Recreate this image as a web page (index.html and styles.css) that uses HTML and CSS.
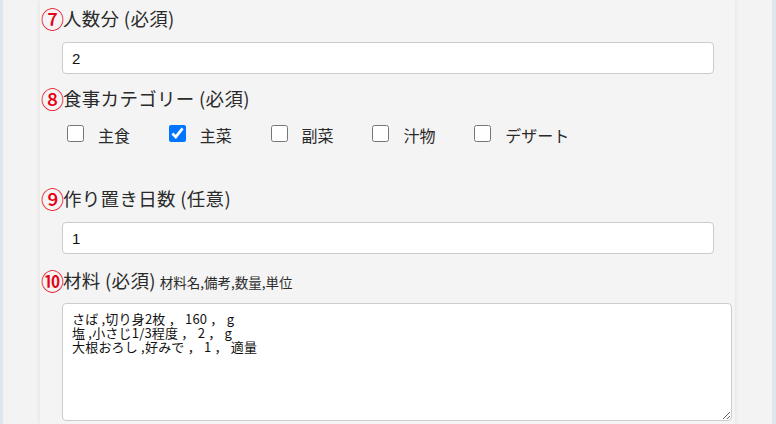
FILE: index.html
```html
<!DOCTYPE html>
<html lang="ja">
<head>
<meta charset="utf-8">
<link rel="stylesheet" href="styles.css">
</head>
<body>
<div class="page">
  <form class="card">
    <div class="label-row first"><span class="num">⑦</span><span class="title">人数分 (必須)</span></div>
    <input class="field" type="text" value="2">

    <div class="label-row"><span class="num">⑧</span><span class="title">食事カテゴリー (必須)</span></div>
    <div class="checks">
      <label class="check"><input type="checkbox"><span>主食</span></label>
      <label class="check"><input type="checkbox" checked><span>主菜</span></label>
      <label class="check"><input type="checkbox"><span>副菜</span></label>
      <label class="check"><input type="checkbox"><span>汁物</span></label>
      <label class="check"><input type="checkbox"><span>デザート</span></label>
    </div>

    <div class="label-row gap-big"><span class="num">⑨</span><span class="title">作り置き日数 (任意)</span></div>
    <input class="field" type="text" value="1">

    <div class="label-row gap-mid"><span class="num">⑩</span><span class="title">材料 (必須)</span><span class="hint">材料名,備考,数量,単位</span></div>
    <textarea class="area">さば ,切り身2枚 ， 160 ， g
塩 ,小さじ1/3程度 ， 2 ， g
大根おろし ,好みで ， 1 ， 適量</textarea>
  </form>
</div>
</body>
</html>
```

FILE: styles.css
```css
* { box-sizing: border-box; }
html, body { margin: 0; padding: 0; }
body {
  background: #dce6ec;
  font-family: "Noto Sans CJK JP", "Noto Sans", sans-serif;
  color: #333;
  overflow: hidden;
  height: 424px;
}
.page {
  margin: 0 4px 0 3px;
  background: #f3f3f3;
  height: 424px;
  padding: 0 37px;
  display: flow-root;
}
.card {
  width: 695px;
  height: 424px;
  background: #f4f4f4;
  box-shadow: 0 0 5px rgba(0, 0, 0, 0.09);
  display: flex;
  flex-direction: column;
  align-items: flex-start;
}
.label-row {
  display: flex;
  align-items: center;
  height: 24px;
  margin-top: 12px;
}
.label-row.first { margin-top: 6px; }
.label-row.gap-big { margin-top: 38px; }
.label-row.gap-mid { margin-top: 14px; }
.num {
  color: #e60012;
  font-size: 23px;
  font-weight: 500;
  width: 21px;
  margin-left: 1px;
  margin-right: 1px;
  line-height: 24px;
  text-align: center;
}
.title {
  font-size: 18.5px;
  line-height: 24px;
  letter-spacing: 0.3px;
  color: #2a2a2a;
}
.hint {
  font-size: 13.5px;
  margin-left: 4px;
  margin-top: 3px;
  color: #2a2a2a;
}
.field {
  margin: 12px 0 0 22px;
  width: 652px;
  height: 32px;
  border: 1px solid #ccc;
  border-radius: 4px;
  background: #fff;
  padding: 0 9px;
  font-family: "Liberation Sans", Arial, sans-serif;
  font-size: 15px;
  color: #111;
  outline: none;
}
.checks {
  display: flex;
  margin: 12px 0 0 27px;
  height: 26px;
  align-items: center;
}
.check {
  display: flex;
  align-items: center;
  width: 101.8px;
  font-size: 16px;
  color: #2a2a2a;
}
.check input {
  width: 17px;
  height: 17px;
  margin: 0 14px 0 0;
  position: relative;
  top: -2px;
  accent-color: #0075ff;
}
.check span { line-height: 24px; }
.area {
  margin: 11px 0 0 22px;
  width: 670px;
  height: 118px;
  border: 1px solid #ccc;
  border-radius: 4px;
  background: #fff;
  padding: 8px 9px;
  font-family: "Noto Sans CJK JP", sans-serif;
  font-size: 13px;
  line-height: 14px;
  letter-spacing: 0.2px;
  color: #111;
  resize: vertical;
  outline: none;
}
```
